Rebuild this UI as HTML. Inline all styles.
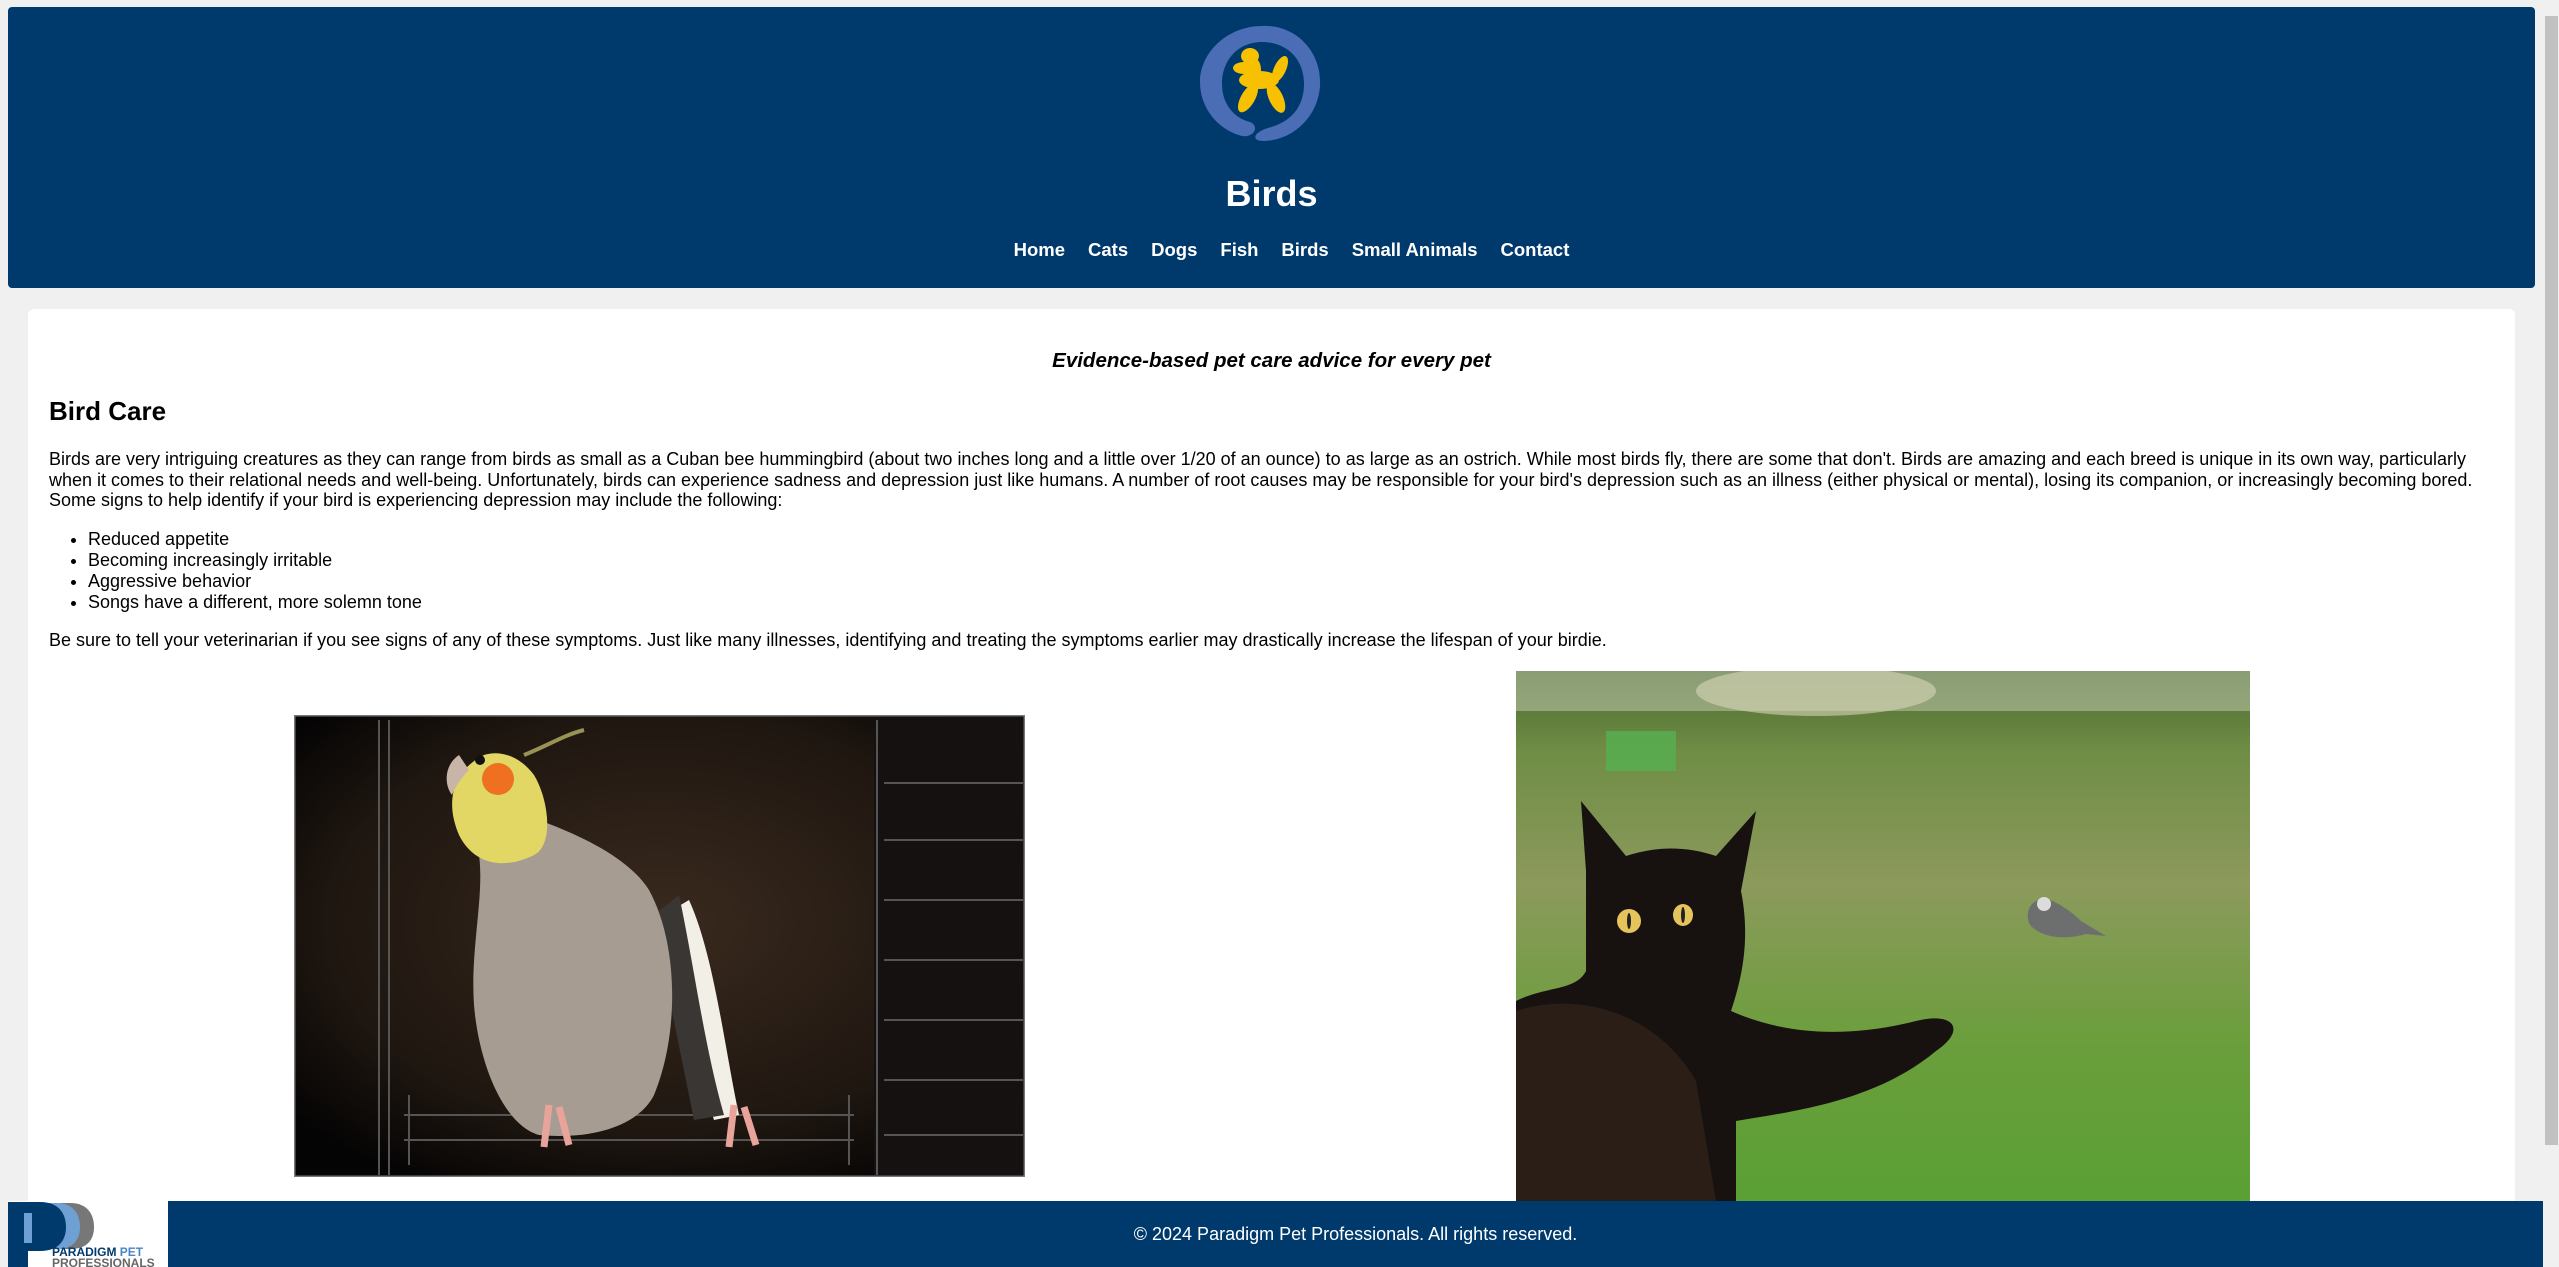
<!DOCTYPE html>
<html><head><meta charset="utf-8">
<style>
html,body{margin:0;padding:0;width:2559px;height:1267px;overflow:hidden;background:#f0f0f0;font-family:"Liberation Sans",Arial,sans-serif;}
.abs{position:absolute;}
#hdr{left:8px;top:7px;width:2527px;height:281px;background:#003a6c;border-radius:4px;}
#title{left:0;width:2543px;top:170px;text-align:center;color:#fff;font-weight:bold;font-size:36px;line-height:48px;}
#nav{left:20px;width:2543px;top:236px;text-align:center;color:#fff;font-weight:bold;font-size:18.5px;line-height:28px;}
#nav span{margin:0 11.5px;}
#card{left:28px;top:309px;width:2487px;height:958px;background:#fff;border-radius:6px 6px 0 0;}
#tag{left:28px;width:2487px;top:347px;text-align:center;font-weight:bold;font-style:italic;font-size:20.5px;line-height:28px;color:#000;}
#h2{left:49px;top:394px;font-weight:bold;font-size:26px;line-height:34px;}
.p{left:49px;font-size:18px;line-height:20.6px;white-space:nowrap;color:#000;}
#p1{top:449px;}
ul{margin:0;padding:0;}
#list{left:88px;top:529px;font-size:18px;line-height:21px;}
#list li{list-style:disc;}
#p2{top:630px;}
#ftr{left:168px;top:1201px;width:2375px;height:66px;background:#003a6c;color:#fff;font-size:18px;text-align:center;line-height:66px;}
#flogo{left:8px;top:1201px;width:160px;height:66px;background:#fff;overflow:hidden;}
#track{left:2543px;top:0;width:16px;height:1267px;background:#f0f0f0;}
#thumb{left:2545px;top:16px;width:13px;height:1129px;background:#c1c1c1;}
</style></head><body>
<div id="hdr" class="abs"></div>
<svg class="abs" style="left:1194px;top:14px" width="136" height="136" viewBox="0 0 136 136">
  <path d="M68 12 C100 10 128 36 126 72 C124 102 100 126 70 127 C56 127 60 118 74 114 C98 108 110 92 110 70 C110 44 92 28 68 28 C44 28 28 46 28 70 C28 90 40 104 56 108 C66 112 60 124 48 122 C24 116 6 94 6 68 C6 38 34 12 68 12 Z" fill="#4a6db5"/>
  <path d="M20 40 L40 22 M28 30 L60 14 M108 36 L122 56" stroke="#4a6db5" stroke-width="3"/>
  <g fill="#f7c000">
    <ellipse cx="56" cy="42" rx="9" ry="8"/>
    <ellipse cx="50" cy="54" rx="11" ry="6"/>
    <ellipse cx="65" cy="66" rx="20" ry="9"/>
    <ellipse cx="60" cy="56" rx="7" ry="12"/>
    <ellipse cx="86" cy="55" rx="6" ry="14" transform="rotate(25 86 55)"/>
    <ellipse cx="54" cy="84" rx="7" ry="16" transform="rotate(30 54 84)"/>
    <ellipse cx="82" cy="84" rx="7" ry="16" transform="rotate(-25 82 84)"/>
  </g>
</svg>
<div id="title" class="abs">Birds</div>
<div id="nav" class="abs"><span>Home</span><span>Cats</span><span>Dogs</span><span>Fish</span><span>Birds</span><span>Small Animals</span><span>Contact</span></div>

<div id="card" class="abs"></div>
<div id="tag" class="abs">Evidence-based pet care advice for every pet</div>
<div id="h2" class="abs">Bird Care</div>
<div id="p1" class="abs p">Birds are very intriguing creatures as they can range from birds as small as a Cuban bee hummingbird (about two inches long and a little over 1/20 of an ounce) to as large as an ostrich. While most birds fly, there are some that don't. Birds are amazing and each breed is unique in its own way, particularly<br>when it comes to their relational needs and well-being. Unfortunately, birds can experience sadness and depression just like humans. A number of root causes may be responsible for your bird's depression such as an illness (either physical or mental), losing its companion, or increasingly becoming bored.<br>Some signs to help identify if your bird is experiencing depression may include the following:</div>
<ul id="list" class="abs"><li>Reduced appetite</li><li>Becoming increasingly irritable</li><li>Aggressive behavior</li><li>Songs have a different, more solemn tone</li></ul>
<div id="p2" class="abs p">Be sure to tell your veterinarian if you see signs of any of these symptoms. Just like many illnesses, identifying and treating the symptoms earlier may drastically increase the lifespan of your birdie.</div>

<svg class="abs" style="left:294px;top:715px" width="731" height="462" viewBox="0 0 731 462">
  <defs><radialGradient id="bg1" cx="50%" cy="45%" r="65%"><stop offset="0" stop-color="#3a2a1e"/><stop offset="0.7" stop-color="#1e1610"/><stop offset="1" stop-color="#050404"/></radialGradient></defs>
  <rect width="731" height="462" fill="url(#bg1)" stroke="#777" stroke-width="3"/>
  <rect x="580" y="2" width="149" height="458" fill="#141110"/>
  <g stroke="#555" stroke-width="2"><line x1="85" y1="5" x2="85" y2="460"/><line x1="95" y1="5" x2="95" y2="460"/><line x1="583" y1="5" x2="583" y2="460"/>
  <line x1="590" y1="68" x2="729" y2="68"/><line x1="590" y1="125" x2="729" y2="125"/><line x1="590" y1="185" x2="729" y2="185"/><line x1="590" y1="245" x2="729" y2="245"/><line x1="590" y1="305" x2="729" y2="305"/><line x1="590" y1="365" x2="729" y2="365"/><line x1="590" y1="420" x2="729" y2="420"/>
  <line x1="110" y1="400" x2="560" y2="400"/><line x1="110" y1="425" x2="560" y2="425"/><line x1="115" y1="380" x2="115" y2="450"/><line x1="555" y1="380" x2="555" y2="450"/></g>
  <path d="M395 185 C420 240 430 330 445 400 L420 405 C395 330 380 260 370 200 Z" fill="#f2efe6"/>
  <path d="M385 180 C400 250 410 330 430 400 L400 405 C385 330 370 260 360 200 Z" fill="#3a3633"/>
  <path d="M175 110 C200 150 175 220 180 290 C185 350 210 410 245 420 C300 425 345 410 360 380 C385 320 385 230 355 175 C330 135 260 110 230 100 Z" fill="#a79c91"/>
  <path d="M190 40 C160 55 150 85 165 120 C180 150 210 155 240 140 C260 130 255 85 240 60 C225 40 205 35 190 40 Z" fill="#e2d764"/>
  <ellipse cx="204" cy="64" rx="16" ry="16" fill="#f07022"/>
  <circle cx="186" cy="45" r="5" fill="#111"/>
  <path d="M165 40 C150 50 150 70 158 80 C162 70 170 60 175 55 Z" fill="#c8b5a8"/>
  <path d="M230 40 C255 30 270 20 290 15" stroke="#9a9255" stroke-width="4" fill="none"/>
  <path d="M255 390 L250 432 M265 392 L275 430 M440 390 L435 432 M450 392 L462 430" stroke="#e8a49a" stroke-width="7"/>
</svg>

<svg class="abs" style="left:1516px;top:671px" width="734" height="530" viewBox="0 0 734 530">
  <defs><linearGradient id="g2" x1="0" y1="0" x2="0" y2="1"><stop offset="0" stop-color="#4c6a30"/><stop offset="0.15" stop-color="#6f8d45"/><stop offset="0.4" stop-color="#8c9a5c"/><stop offset="0.7" stop-color="#6b9e3c"/><stop offset="1" stop-color="#5aa034"/></linearGradient></defs>
  <rect width="734" height="530" fill="url(#g2)"/>
  <rect x="0" y="0" width="734" height="40" fill="#c9cfb8" opacity="0.5"/>
  <ellipse cx="300" cy="20" rx="120" ry="25" fill="#d8d6b8" opacity="0.6"/>
  <rect x="90" y="60" width="70" height="40" fill="#56b050" opacity="0.8"/>
  <path d="M0 330 C30 315 60 320 70 300 L70 200 L65 130 L110 185 C140 175 170 175 200 185 L240 140 L225 220 C235 270 225 310 215 340 C260 360 320 370 400 350 C440 340 450 360 420 380 C360 430 280 440 220 450 L220 530 L0 530 Z" fill="#171210"/>
  <path d="M0 340 C60 320 140 340 180 410 L200 530 L0 530 Z" fill="#2a1e17"/>
  <ellipse cx="113" cy="250" rx="12" ry="12" fill="#e6c45c"/>
  <ellipse cx="167" cy="244" rx="10" ry="11" fill="#e6c45c"/>
  <ellipse cx="113" cy="250" rx="2" ry="8" fill="#222"/>
  <ellipse cx="167" cy="244" rx="2" ry="8" fill="#222"/>
  <path d="M520 230 C510 235 510 250 515 255 C525 265 545 270 570 263 L590 265 L565 250 C555 240 540 230 530 228 Z" fill="#6d6e6e"/>
  <circle cx="528" cy="233" r="7" fill="#dcdcdc"/>
</svg>

<div id="ftr" class="abs">© 2024 Paradigm Pet Professionals. All rights reserved.</div>
<div id="flogo" class="abs">
  <svg width="160" height="66" viewBox="0 0 160 66">
    <rect x="0" y="1" width="160" height="65" fill="#fff"/>
    <path d="M52 2 L62 2 C80 2 86 14 86 26 C86 38 80 48 62 48 L52 48 Z" fill="#777"/>
    <path d="M36 2 L48 2 C66 2 72 14 72 26 C72 38 66 48 48 48 L36 48 Z" fill="#6fa0d4"/>
    <path d="M0 1 L32 1 C52 1 58 14 58 26 C58 40 50 50 32 50 L20 50 L20 66 L0 66 Z" fill="#003a6c"/>
    <rect x="16" y="12" width="8" height="30" fill="#6fa0d4"/>
    <rect x="24" y="12" width="6" height="30" fill="#003a6c"/>
    <text x="44" y="55" font-family="Liberation Sans" font-weight="bold" font-size="12" fill="#003a6c">PARADIGM <tspan fill="#4a85c5">PET</tspan></text>
    <text x="44" y="66" font-family="Liberation Sans" font-weight="bold" font-size="12" fill="#666">PROFESSIONALS</text>
  </svg>
</div>
<div id="track" class="abs"></div>
<div id="thumb" class="abs"></div>
</body></html>
